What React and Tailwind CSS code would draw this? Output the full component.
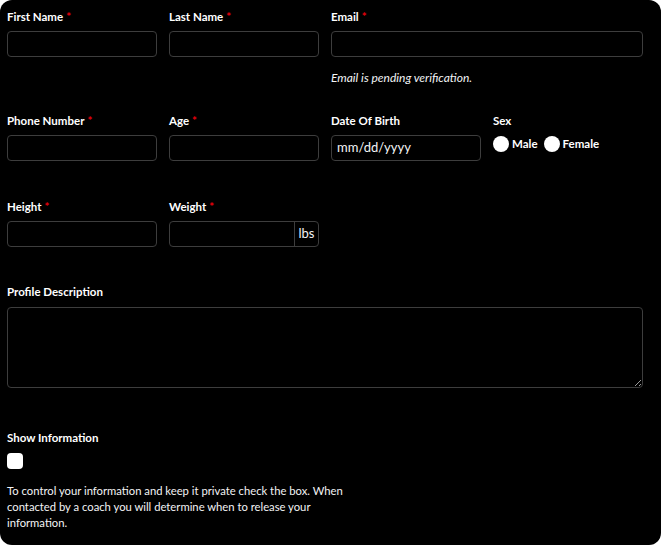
export default function App() {
  const font = { fontFamily: "Lato, 'Noto Sans', sans-serif" };
  return (
    <div className="min-h-screen bg-white">
      <div
        className="h-[545px] w-[661px] rounded-[12px] bg-black px-[7px] pt-[10px] text-white"
        style={font}
      >
        {/* Row 1 */}
        <div className="grid grid-cols-[150px_150px_312px] gap-x-3">
          <Field label="First Name" required />
          <Field label="Last Name" required />
          <div>
            <Label text="Email" required />
            <Input />
            <p className="mt-[14px] text-[12px] italic leading-[14px] text-gray-100">
              Email is pending verification.
            </p>
          </div>
        </div>

        {/* Row 2 */}
        <div className="mt-[29px] grid grid-cols-[150px_150px_150px_150px] gap-x-3">
          <Field label="Phone Number" required />
          <Field label="Age" required />
          <div>
            <Label text="Date Of Birth" />
            <div className="flex h-[26px] items-center rounded-[4px] border border-[#3d3d3d] px-[5px] text-[13px] text-gray-100">
              mm/dd/yyyy
            </div>
          </div>
          <div>
            <Label text="Sex" />
            <div className="mt-[1px] flex items-center text-[11.5px] font-bold">
              <span className="h-4 w-4 rounded-full bg-white" />
              <span className="ml-[3px]">Male</span>
              <span className="ml-[6px] h-4 w-4 rounded-full bg-white" />
              <span className="ml-[3px]">Female</span>
            </div>
          </div>
        </div>

        {/* Row 3 */}
        <div className="mt-[39px] grid grid-cols-[150px_150px] gap-x-3">
          <Field label="Height" required />
          <div>
            <Label text="Weight" required />
            <div className="flex h-[26px] rounded-[4px] border border-[#3d3d3d]">
              <div className="flex-1" />
              <div className="flex w-[24px] items-center justify-center border-l border-[#3d3d3d] text-[13px] text-gray-100">
                lbs
              </div>
            </div>
          </div>
        </div>

        {/* Profile description */}
        <div className="mt-[38px] w-[636px]">
          <div className="mb-[8px] text-[11.5px] font-bold leading-[14px]">Profile Description</div>
          <textarea className="block h-[81px] w-full rounded-[4px] border border-[#3d3d3d] bg-black" />
        </div>

        {/* Show information */}
        <div className="mt-[43px]">
          <div className="mb-[8px] text-[11.5px] font-bold leading-[14px]">Show Information</div>
          <div className="h-4 w-4 rounded-[4px] bg-white" />
          <p className="mt-[14px] w-[352px] text-[11.25px] leading-[16px] text-gray-100">
            To control your information and keep it private check the box. When contacted by a
            coach you will determine when to release your information.
          </p>
        </div>
      </div>
    </div>
  );
}

function Label({ text, required }) {
  return (
    <div className="mb-[7px] text-[11.5px] font-bold leading-[14px]">
      {text}
      {required && <span className="ml-[3px] text-red-600">*</span>}
    </div>
  );
}

function Input() {
  return <div className="h-[26px] rounded-[4px] border border-[#3d3d3d]" />;
}

function Field({ label, required }) {
  return (
    <div>
      <Label text={label} required={required} />
      <Input />
    </div>
  );
}
